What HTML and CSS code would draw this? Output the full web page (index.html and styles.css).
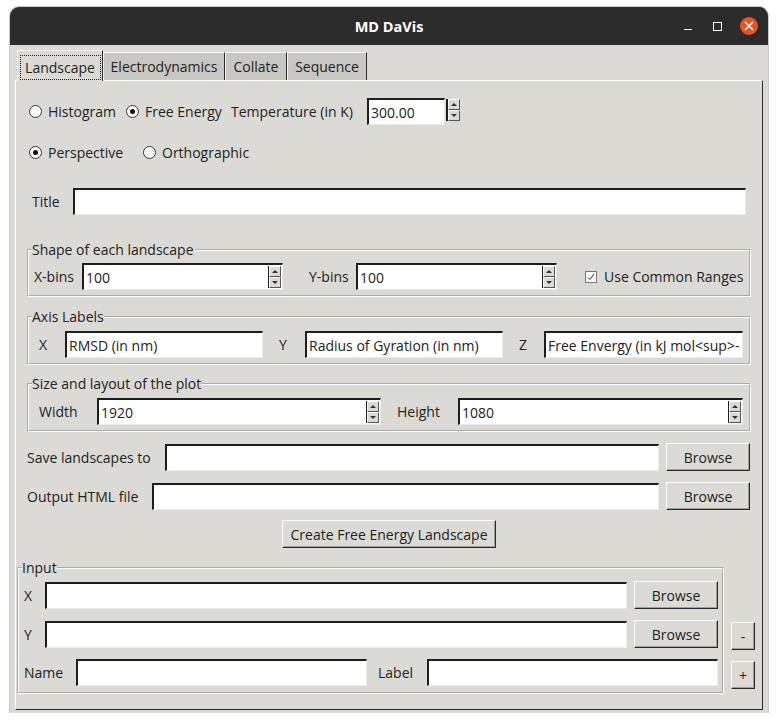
FILE: index.html
```html
<!DOCTYPE html>
<html>
<head>
<meta charset="utf-8">
<link rel="stylesheet" href="styles.css">
</head>
<body>
<div class="win">
  <div class="titlebar">
    <div></div>
    <div class="title">MD DaVis</div>
    <div class="ctrls">
      <span class="cmin"></span>
      <span class="cmax"></span>
      <span class="cclose"><svg width="10" height="10" viewBox="0 0 10 10"><path d="M1 1L9 9M9 1L1 9" stroke="#fff" stroke-width="1.6"/></svg></span>
    </div>
  </div>
  <div class="client">
    <div class="tabs">
      <div class="tab sel"><span class="focus">Landscape</span></div>
      <div class="tab w-ed">Electrodynamics</div>
      <div class="tab w-co">Collate</div>
      <div class="tab w-se">Sequence</div>
    </div>
    <div class="pane">
      <div class="row r1">
        <label class="radio w-hist"><span class="rb"></span>Histogram</label>
        <label class="radio w-fe"><span class="rb on"></span>Free Energy</label>
        <span class="lbl w-temp">Temperature (in K)</span>
        <div class="spin small">
          <div class="entry sfield">300.00</div>
          <div class="arrows"><span class="up"></span><span class="dn"></span></div>
        </div>
      </div>
      <div class="row r2">
        <label class="radio w-persp"><span class="rb on"></span>Perspective</label>
        <label class="radio"><span class="rb"></span>Orthographic</label>
      </div>
      <div class="row r3">
        <span class="lbl w-title">Title</span>
        <div class="entry w-titlein"></div>
      </div>

      <fieldset class="grp g-shape">
        <legend>Shape of each landscape</legend>
        <div class="row in-shape">
          <span class="lbl w-xb">X-bins</span>
          <div class="entry spinbox w-bins">100<div class="arrows in"><span class="up"></span><span class="dn"></span></div></div>
          <span class="lbl w-yb">Y-bins</span>
          <div class="entry spinbox w-bins">100<div class="arrows in"><span class="up"></span><span class="dn"></span></div></div>
          <label class="check"><span class="cb"><svg width="10" height="10" viewBox="0 0 10 10"><path d="M2 5.5L4 7.5L8 2" fill="none" stroke="#333" stroke-width="1"/></svg></span>Use Common Ranges</label>
        </div>
      </fieldset>

      <fieldset class="grp g-axis">
        <legend>Axis Labels</legend>
        <div class="row in-axis">
          <span class="lbl w-ax">X</span>
          <div class="entry w-axin">RMSD (in nm)</div>
          <span class="lbl w-ax gap16">Y</span>
          <div class="entry w-axin">Radius of Gyration (in nm)</div>
          <span class="lbl w-az gap16">Z</span>
          <div class="entry w-azin">Free Envergy (in kJ mol&lt;sup&gt;-</div>
        </div>
      </fieldset>

      <fieldset class="grp g-size">
        <legend>Size and layout of the plot</legend>
        <div class="row in-axis">
          <span class="lbl w-wd">Width</span>
          <div class="entry spinbox w-wdin">1920<div class="arrows in"><span class="up"></span><span class="dn"></span></div></div>
          <span class="lbl w-ht gap16">Height</span>
          <div class="entry spinbox w-htin">1080<div class="arrows in"><span class="up"></span><span class="dn"></span></div></div>
        </div>
      </fieldset>

      <div class="row r-save">
        <span class="lbl w-save">Save landscapes to</span>
        <div class="entry w-savein"></div>
        <button class="btn w-browse">Browse</button>
      </div>
      <div class="row r-out">
        <span class="lbl w-out">Output HTML file</span>
        <div class="entry w-outin"></div>
        <button class="btn w-browse">Browse</button>
      </div>
      <div class="row r-create">
        <button class="btn w-create">Create Free Energy Landscape</button>
      </div>

      <div class="bottom">
        <fieldset class="grp g-input">
          <legend>Input</legend>
          <div class="row in-row first">
            <span class="lbl w-ix">X</span>
            <div class="entry w-ixin"></div>
            <button class="btn w-browse">Browse</button>
          </div>
          <div class="row in-row">
            <span class="lbl w-ix">Y</span>
            <div class="entry w-ixin"></div>
            <button class="btn w-browse">Browse</button>
          </div>
          <div class="row in-row">
            <span class="lbl w-name">Name</span>
            <div class="entry w-namein"></div>
            <span class="lbl w-label">Label</span>
            <div class="entry w-namein"></div>
          </div>
        </fieldset>
        <div class="pm">
          <button class="btn sq">-</button>
          <button class="btn sq">+</button>
        </div>
      </div>
    </div>
  </div>
</div>
</body>
</html>
```
FILE: styles.css
```css
* { box-sizing: border-box; }
body {
  margin: 0;
  background: #ffffff;
  font-family: "Open Sans", "Noto Sans", sans-serif;
  font-size: 14px;
  color: #222;
}
.win {
  margin: 7px 0 0 10px;
  width: 758px;
  height: 706px;
  border-radius: 9px 9px 0 0;
  background: #dcdad5;
  overflow: hidden;
  box-shadow: 0 0 0 1px #c9c9c9;
}
.titlebar {
  height: 38px;
  background: #2c2c2c;
  display: grid;
  grid-template-columns: 1fr auto 1fr;
  align-items: center;
}
.title {
  color: #fff;
  font-weight: bold;
  font-size: 14.5px;
}
.ctrls {
  display: flex;
  justify-content: flex-end;
  align-items: center;
  padding-right: 10px;
}
.cmin {
  width: 8px;
  height: 1px;
  background: #fff;
  margin-top: 6px;
  margin-right: 21px;
}
.cmax {
  width: 9px;
  height: 9px;
  border: 1px solid #fff;
  margin-right: 18px;
}
.cclose {
  width: 18px;
  height: 18px;
  border-radius: 50%;
  background: #e95420;
  display: flex;
  align-items: center;
  justify-content: center;
}
.client {
  padding: 5px 5px 0 5px;
}
.tabs {
  display: flex;
  align-items: flex-end;
  height: 30px;
  padding-left: 2px;
}
.tab {
  height: 28px;
  background: #c9c7c2;
  border-top: 1px solid #f4f4f2;
  border-left: 1px solid #f4f4f2;
  border-right: 1px solid #2a2a2a;
  display: flex;
  align-items: center;
  justify-content: center;
  white-space: nowrap;
}
.tab.sel {
  height: 31px;
  width: 86px;
  background: #dcdad5;
  margin-bottom: -1px;
  position: relative;
  z-index: 1;
  border-color: #fff;
  border-right-color: #2a2a2a;
}
.focus {
  border: 1px dotted #222;
  padding: 2px 1px;
  width: 81px;
  height: 25px;
  margin-top: 3px;
  display: flex;
  align-items: center;
  justify-content: center;
}
.w-ed { width: 122px; }
.w-co { width: 62px; }
.w-se { width: 80px; }

.pane {
  height: 630px;
  border-top: 1px solid #fff;
  border-left: 1px solid #fff;
  border-right: 1px solid #2a2a2a;
  border-bottom: 1px solid #2a2a2a;
  display: flex;
  flex-direction: column;
  align-items: flex-start;
}
.row {
  display: flex;
  align-items: center;
  flex: none;
}
.lbl, .radio, .check { white-space: nowrap; }
.r1 { margin-top: 17px; height: 27px; padding-left: 13px; }
.r2 { margin-top: 14px; height: 27px; padding-left: 13px; }
.r3 { margin-top: 22px; height: 27px; padding-left: 16px; }

.radio { display: flex; align-items: center; }
.rb {
  width: 13px;
  height: 13px;
  border: 1px solid #333;
  border-radius: 50%;
  background: #fff;
  margin-right: 6px;
  display: flex;
  align-items: center;
  justify-content: center;
}
.rb.on::after {
  content: "";
  width: 5px;
  height: 5px;
  border-radius: 50%;
  background: #111;
}
.w-hist { width: 97px; }
.w-fe { width: 105px; }
.w-temp { width: 136px; }
.w-persp { width: 114px; }
.w-title { width: 41px; }

.entry {
  height: 27px;
  background: #fff;
  border-style: solid;
  border-width: 2px 1px 1px 2px;
  border-color: #1e1e1e #ecebe8 #ecebe8 #1e1e1e;
  display: flex;
  align-items: center;
  padding-left: 2px;
  white-space: nowrap;
  overflow: hidden;
}
.w-titlein { width: 673px; }

.spin { display: flex; align-items: flex-start; height: 27px; }
.sfield { width: 78px; }
.arrows {
  width: 14px;
  height: 22px;
  display: flex;
  flex-direction: column;
  margin-left: 1px;
  margin-top: 1px;
  border-left: 2px solid #1e1e1e;
}
.arrows.in {
  margin-left: auto;
  margin-right: 1px;
  margin-top: 0;
  width: 13px;
  border-left: 1px solid #1e1e1e;
}
.arrows span {
  flex: 1;
  background: #dcdad5;
  border: 1px solid;
  border-color: #fff #555 #555 #fff;
  display: flex;
  align-items: center;
  justify-content: center;
}
.arrows .up::after {
  content: "";
  border-left: 3px solid transparent;
  border-right: 3px solid transparent;
  border-bottom: 3px solid #333;
}
.arrows .dn::after {
  content: "";
  border-left: 3px solid transparent;
  border-right: 3px solid transparent;
  border-top: 3px solid #333;
}
.spinbox { padding-right: 0; }

.grp {
  margin: 0;
  padding: 0;
  border: 2px groove #ffffff;
  min-width: 0;
}
.grp legend {
  padding: 0;
  margin-left: 3px;
  line-height: 18px;
}
.g-shape { margin: 26px 0 0 11px; width: 724px; }
.g-axis { margin: 11px 0 0 11px; width: 724px; }
.g-size { margin: 10px 0 0 11px; width: 724px; }
.in-shape { padding: 4px 0 5px 5px; }
.in-axis { padding: 5px 0 5px 10px; }

.w-xb { width: 48px; }
.w-yb { width: 47px; margin-left: 26px; }
.w-bins { width: 201px; }
.check { display: flex; align-items: center; margin-left: 28px; }
.cb {
  width: 12px;
  height: 12px;
  border: 1px solid #777;
  background: #fff;
  margin-right: 7px;
  display: flex;
  align-items: center;
  justify-content: center;
}
.w-ax { width: 26px; }
.w-az { width: 25px; }
.gap16 { margin-left: 16px; }
.w-axin { width: 198px; }
.w-azin { width: 199px; }
.w-wd { width: 58px; }
.w-wdin { width: 284px; }
.w-ht { width: 61px; }
.w-htin { width: 285px; }

.btn {
  font: inherit;
  color: #222;
  height: 28px;
  background: #dcdad5;
  border: 1px solid;
  border-color: #fff #2a2a2a #2a2a2a #fff;
  box-shadow: inset -1px -1px 0 #a09f9b;
  padding: 0;
  white-space: nowrap;
}
.w-browse { width: 84px; margin-left: 7px; }

.r-save { margin: 11px 0 0 11px; }
.r-out { margin: 11px 0 0 11px; }
.w-save { width: 138px; }
.w-savein { width: 494px; }
.w-out { width: 125px; }
.w-outin { width: 507px; }
.r-create { margin-top: 10px; align-self: center; }
.w-create { width: 214px; }

.bottom {
  display: flex;
  align-items: flex-end;
  margin: 11px 0 0 1px;
}
.g-input { width: 707px; }
.in-row { padding: 0 0 0 5px; margin-top: 11px; }
.in-row.first { margin-top: 4px; }
.g-input .in-row:last-child { margin-bottom: 6px; }
.w-ix { width: 21px; }
.w-ixin { width: 582px; }
.w-name { width: 52px; }
.w-namein { width: 291px; }
.w-label { width: 49px; margin-left: 11px; }

.pm {
  display: flex;
  flex-direction: column;
  gap: 11px;
  margin-left: 7px;
  margin-bottom: 5px;
}
.btn.sq { width: 24px; height: 28px; }
```
